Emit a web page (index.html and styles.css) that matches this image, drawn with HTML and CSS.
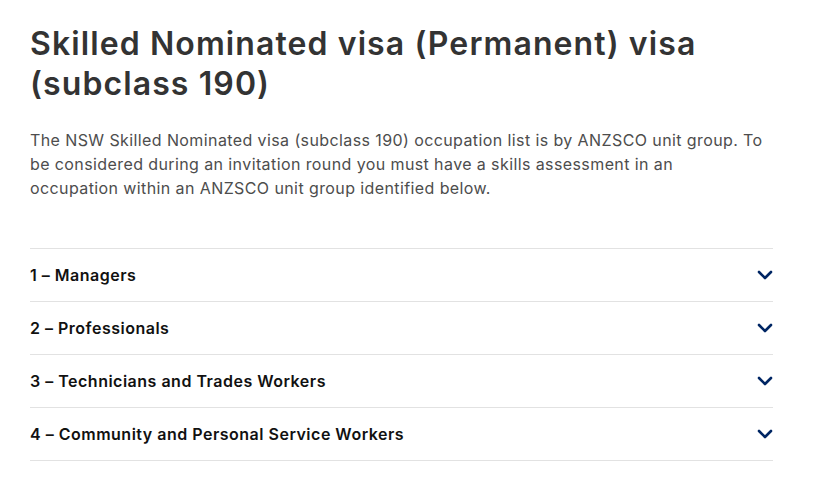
FILE: index.html
```html
<!DOCTYPE html>
<html lang="en">
<head>
<meta charset="utf-8">
<title>Skilled Nominated visa (subclass 190)</title>
<link rel="stylesheet" href="styles.css">
</head>
<body>
<main class="page">
  <h1 class="title">Skilled Nominated visa (Permanent) visa (subclass 190)</h1>
  <p class="intro">The NSW Skilled Nominated visa (subclass 190) occupation list is by ANZSCO unit group. To be considered during an invitation round you must have a skills assessment in an<br>occupation within an ANZSCO unit group identified below.</p>
  <div class="accordion">
    <button class="acc-item" type="button"><span class="acc-label">1 – Managers</span><svg class="chev" viewBox="0 0 16 10" width="16" height="10"><path d="M2 2 L8 8 L14 2"/></svg></button>
    <button class="acc-item" type="button"><span class="acc-label">2 – Professionals</span><svg class="chev" viewBox="0 0 16 10" width="16" height="10"><path d="M2 2 L8 8 L14 2"/></svg></button>
    <button class="acc-item" type="button"><span class="acc-label">3 – Technicians and Trades Workers</span><svg class="chev" viewBox="0 0 16 10" width="16" height="10"><path d="M2 2 L8 8 L14 2"/></svg></button>
    <button class="acc-item" type="button"><span class="acc-label">4 – Community and Personal Service Workers</span><svg class="chev" viewBox="0 0 16 10" width="16" height="10"><path d="M2 2 L8 8 L14 2"/></svg></button>
  </div>
</main>
</body>
</html>
```
FILE: styles.css
```css
html, body {
  margin: 0;
  padding: 0;
  background: #ffffff;
}
.page {
  width: 743px;
  padding: 24px 0 0 30px;
  font-family: Inter, "DejaVu Sans", sans-serif;
}
.title {
  margin: 0;
  font-family: Inter, "DejaVu Sans", sans-serif;
  font-weight: 600;
  font-size: 32px;
  line-height: 40px;
  letter-spacing: 1.1px;
  color: #333333;
}
.intro {
  margin: 24px 0 0 0;
  font-size: 16px;
  line-height: 24px;
  letter-spacing: 0.4px;
  color: #4d4d4d;
}
.accordion {
  margin-top: 48px;
  border-top: 1px solid #e2e2e2;
  display: flex;
  flex-direction: column;
}
.acc-item {
  display: flex;
  align-items: center;
  justify-content: space-between;
  height: 53px;
  padding: 0;
  margin: 0;
  background: none;
  border: 0;
  border-bottom: 1px solid #e2e2e2;
  font-family: Inter, "DejaVu Sans", sans-serif;
  font-size: 16px;
  font-weight: 600;
  letter-spacing: 0.5px;
  color: #111111;
  text-align: left;
  cursor: pointer;
}
.chev {
  fill: none;
  stroke: #002664;
  stroke-width: 2.6;
  stroke-linecap: round;
  stroke-linejoin: round;
}
```
